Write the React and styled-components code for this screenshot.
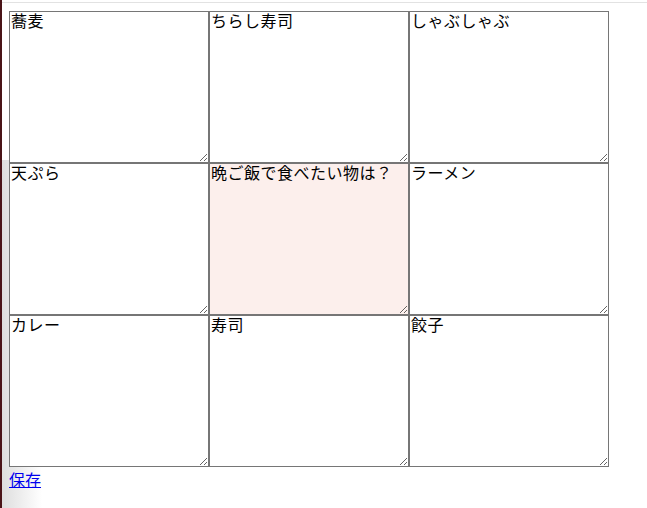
import React from 'react';
import styled, { createGlobalStyle } from 'styled-components';

const GlobalStyle = createGlobalStyle`
    html, body {
        margin: 0;
        padding: 0;
        background: #fff;
    }
    body {
        min-height: 508px;
        font-family: "Noto Sans CJK JP", "Noto Sans", sans-serif;
        border-left: 2px solid #4a1418;
        box-sizing: border-box;
        background:
            linear-gradient(#e2e2e2, #e2e2e2) 0 2px / 100% 1px no-repeat,
            linear-gradient(to right, #dedede, #ffffff 40px) 0 160px / 40px 100% no-repeat,
            #fff;
    }
`;

const Page = styled.div`
    padding: 11px 0 0 7px;
`;

const Board = styled.div`
    display: grid;
    grid-template-columns: repeat(3, 200px);
    grid-auto-rows: 152px;
`;

const Cell = styled.textarea`
    display: block;
    box-sizing: border-box;
    width: 200px;
    height: 152px;
    margin: 0;
    padding: 0 1px;
    border: 1px solid #767676;
    background: ${({ $center }) => ($center ? '#fcefec' : '#fff')};
    color: #000;
    font-family: "Noto Sans CJK JP", "Noto Sans", sans-serif;
    font-size: 16px;
    line-height: 16px;
    letter-spacing: 0.5px;
    outline: none;
`;

const SaveLink = styled.a`
    display: inline-block;
    color: #0000ee;
    font-size: 16px;
    text-decoration: underline;
    cursor: pointer;
`;

const items = [
    '蕎麦',
    'ちらし寿司',
    'しゃぶしゃぶ',
    '天ぷら',
    '晩ご飯で食べたい物は？',
    'ラーメン',
    'カレー',
    '寿司',
    '餃子',
];

const App = () => {
    return (
        <Page>
            <GlobalStyle />
            <Board>
                {items.map((text, i) => (
                    <Cell key={i} $center={i === 4} defaultValue={text} />
                ))}
            </Board>
            <SaveLink href="#">保存</SaveLink>
        </Page>
    );
};

export default App;
